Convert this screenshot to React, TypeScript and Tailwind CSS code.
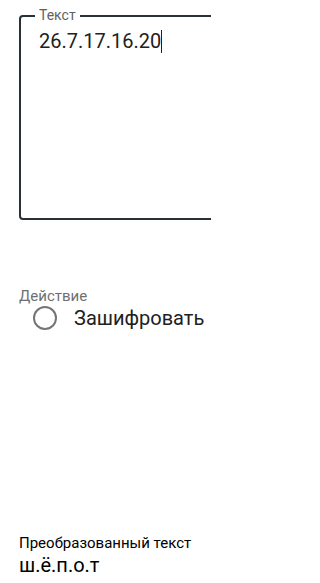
export default function App() {
  return (
    <div className="w-[211px] h-[583px] overflow-hidden bg-white font-['Roboto',sans-serif]">
      {/* Text field */}
      <div className="pl-[19px] pt-[15px]">
        <div className="relative w-[320px] h-[205px] rounded border-2 border-[#263238] pt-[12px] pl-[18px]">
          <span className="absolute -top-[10px] left-[14px] bg-white px-[4px] text-[14px] leading-4 text-[#616161]">
            Текст
          </span>
          <div className="flex items-center text-[20px] leading-6 text-[#212121]">
            <span>26.7.17.16.20</span>
            <span className="w-px h-[23px] bg-[#212121]" />
          </div>
        </div>
      </div>

      {/* Action */}
      <div className="pl-[19px] mt-[66px]">
        <div className="text-[15px] leading-5 text-[#6f6f6f]">Действие</div>
        <label className="flex items-center gap-[17px] pl-[14px]">
          <span className="w-[24px] h-[24px] rounded-full border-2 border-[#757575]" />
          <span className="text-[20px] leading-6 text-[#212121]">Зашифровать</span>
        </label>
      </div>

      {/* Result */}
      <div className="pl-[19px] mt-[203px]">
        <div className="text-[15px] leading-5 text-black">Преобразованный текст</div>
        <div className="text-[20px] leading-6 text-black">ш.ё.п.о.т</div>
      </div>
    </div>
  )
}
